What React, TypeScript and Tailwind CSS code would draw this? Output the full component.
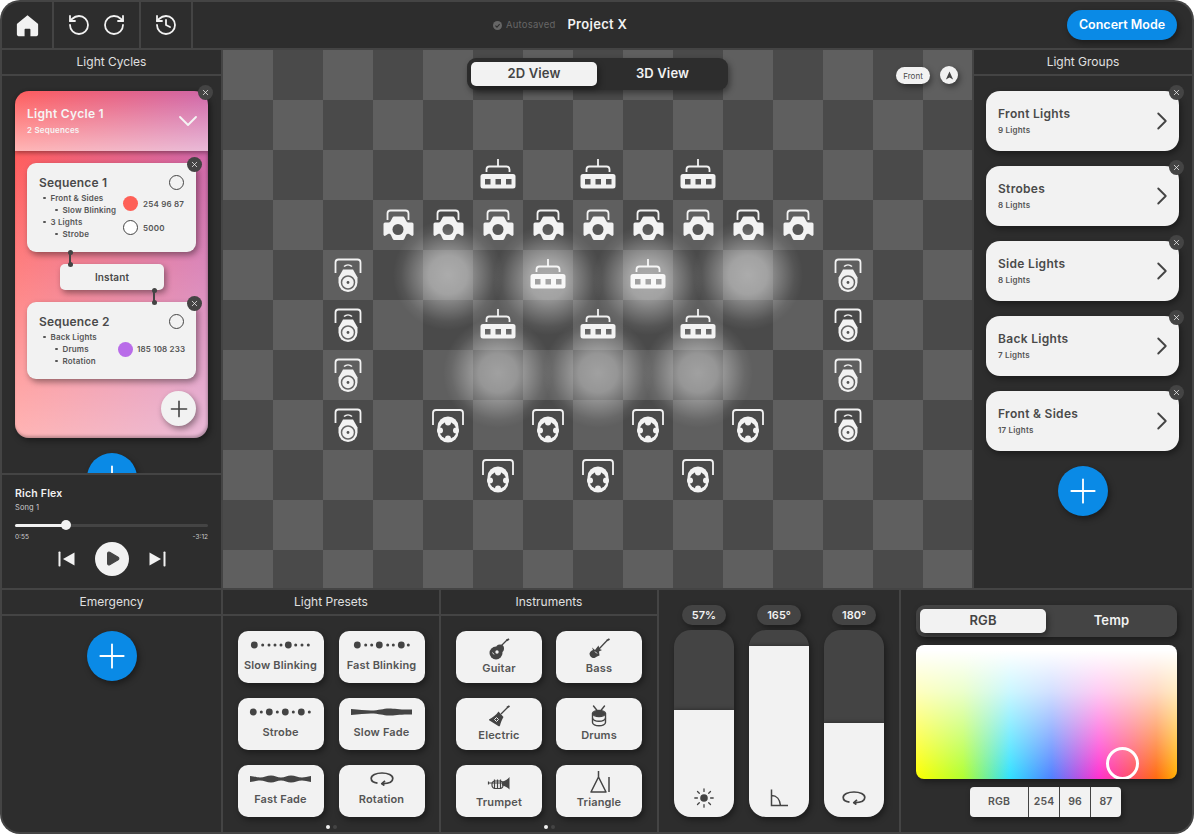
import React from 'react';
import { RotateCcw, RotateCw, History, ChevronDown, ChevronRight, Plus, X, Play } from 'lucide-react';

const CARD_SHADOW = 'shadow-[2px_3px_6px_rgba(0,0,0,0.4)]';
const CARD_GRADIENT =
  'bg-[linear-gradient(to_bottom,rgba(255,255,255,0),rgba(255,255,255,0.55)),linear-gradient(to_right,#ff5c5c,#cf66a8)]';

// ---- stage light glyphs, all on a 50x50 cell

const BarLight = () => (
  <svg viewBox="0 0 50 50" className="w-[50px] h-[50px]">
    <path d="M25 9v7M13.5 22v-2.5a3 3 0 0 1 3-3h17a3 3 0 0 1 3 3V22" fill="none" stroke="#f2f2f2" strokeWidth="1.8" />
    <rect x="7.5" y="24" width="35" height="14.5" rx="2.5" fill="#f2f2f2" />
    <rect x="12" y="29" width="5.5" height="5.5" fill="#555" />
    <rect x="22.5" y="29" width="5.5" height="5.5" fill="#555" />
    <rect x="33" y="29" width="5.5" height="5.5" fill="#555" />
  </svg>
);

const SpotLight = () => (
  <svg viewBox="0 0 50 50" className="w-[50px] h-[50px]">
    <path d="M14.5 20v-6.5a3 3 0 0 1 3-3h15a3 3 0 0 1 3 3V20" fill="none" stroke="#f2f2f2" strokeWidth="1.8" />
    <path
      d="M20.5 16.5h9c1 0 1.700.4 2.200 1.400l1.600 3c.6 1 1.400 1.600 2.700 1.600h3a1.500 1.500 0 0 1 1.500 1.500v10.500c0 1.300-1.200 1.800-2.200 1.100l-2.300-1.600c-1-.7-2.300-.3-2.800.8l-1.700 3.700c-.5 1-1.200 1.500-2.300 1.500h-7.400c-1.100 0-1.800-.5-2.300-1.500l-1.700-3.700c-.5-1.100-1.800-1.500-2.800-.8l-2.300 1.600c-1 .7-2.200.2-2.200-1.100V24a1.500 1.500 0 0 1 1.500-1.500h3c1.300 0 2.100-.6 2.700-1.600l1.600-3c.5-1 1.200-1.400 2.200-1.400z"
      fill="#f2f2f2"
    />
    <circle cx="25" cy="29.5" r="5.5" fill="#555" />
  </svg>
);

const SideLight = () => (
  <svg viewBox="0 0 50 50" className="w-[50px] h-[50px]">
    <path d="M12.5 23v-10.500a3 3 0 0 1 3-3h19a3 3 0 0 1 3 3V23" fill="none" stroke="#f2f2f2" strokeWidth="1.8" />
    <path d="M21 16.5a6 6 0 0 1 8 0" fill="none" stroke="#f2f2f2" strokeWidth="1.6" />
    <path d="M20 19.5h10l4.500 8v5a9.500 9.500 0 0 1-19 0v-5z" fill="#f2f2f2" />
    <circle cx="25" cy="32.5" r="6.5" fill="none" stroke="#666" strokeWidth="1.5" />
    <circle cx="25" cy="32.5" r="1.4" fill="#555" />
  </svg>
);

const BackLight = () => (
  <svg viewBox="0 0 50 50" className="w-[50px] h-[50px]">
    <path d="M10 25V13a3 3 0 0 1 3-3h24a3 3 0 0 1 3 3v12" fill="none" stroke="#f2f2f2" strokeWidth="1.8" />
    <rect x="14.5" y="16.5" width="21" height="26" rx="10.5" fill="#f2f2f2" />
    <circle cx="25" cy="30.5" r="8.5" fill="#4a4a4a" />
    <circle cx="25" cy="22.5" r="3" fill="#f2f2f2" />
    <circle cx="25" cy="38.5" r="3" fill="#f2f2f2" />
    <circle cx="17" cy="30.5" r="3" fill="#f2f2f2" />
    <circle cx="33" cy="30.5" r="3" fill="#f2f2f2" />
  </svg>
);

const CELL_LIGHTS: Record<string, React.ReactNode> = {};
[5, 7, 9].forEach((c) => (CELL_LIGHTS[`${c},2`] = <BarLight />));
[3, 4, 5, 6, 7, 8, 9, 10, 11].forEach((c) => (CELL_LIGHTS[`${c},3`] = <SpotLight />));
[6, 8].forEach((c) => (CELL_LIGHTS[`${c},4`] = <BarLight />));
[5, 7, 9].forEach((c) => (CELL_LIGHTS[`${c},5`] = <BarLight />));
[4, 5, 6, 7].forEach((r) => {
  CELL_LIGHTS[`2,${r}`] = <SideLight />;
  CELL_LIGHTS[`12,${r}`] = <SideLight />;
});
[4, 6, 8, 10].forEach((c) => (CELL_LIGHTS[`${c},7`] = <BackLight />));
[5, 7, 9].forEach((c) => (CELL_LIGHTS[`${c},8`] = <BackLight />));

const GLOW =
  'absolute w-[110px] h-[110px] rounded-full pointer-events-none bg-[radial-gradient(closest-side,rgba(255,255,255,0.48)_0%,rgba(255,255,255,0.42)_35%,rgba(255,255,255,0.24)_60%,rgba(255,255,255,0.06)_85%,rgba(255,255,255,0)_100%)]';

// ---- little shared bits

const CloseBadge = ({ className }: { className: string }) => (
  <div className={`absolute w-[15px] h-[15px] rounded-full bg-[#444444] flex items-center justify-center ${className}`}>
    <X size={9} color="#f2f2f2" strokeWidth={2} />
  </div>
);

const PanelTitle = ({ children }: { children: React.ReactNode }) => (
  <div className="h-[24px] shrink-0 bg-[#2d2d2d] flex items-center justify-center text-[12px] text-[#e0e0e0]">
    {children}
  </div>
);

const BlueAdd = ({ className = '' }: { className?: string }) => (
  <div className={`w-[50px] h-[50px] rounded-full bg-[#0a8ae6] flex items-center justify-center shrink-0 ${CARD_SHADOW} ${className}`}>
    <Plus size={40} color="#ffffff" strokeWidth={1.1} />
  </div>
);

const Dot = ({ className }: { className: string }) => <div className={`w-[15px] h-[15px] rounded-full ${className}`} />;

const Bullet = ({ sub, children }: { sub?: boolean; children: React.ReactNode }) => (
  <div className={`h-[12px] flex items-center text-[8px] font-semibold text-[#555555] tracking-[0.15px] whitespace-nowrap ${sub ? 'pl-[16px]' : 'pl-[4px]'}`}>
    <span className="w-[2.5px] h-[2.5px] rounded-full bg-[#555555] mr-[5px]" />
    {children}
  </div>
);

const Connector = ({ className }: { className: string }) => (
  <div className={`absolute z-10 w-[6px] flex flex-col items-center ${className}`}>
    <span className="w-[5px] h-[5px] rounded-full bg-[#444444] shrink-0" />
    <span className="w-[1.5px] grow bg-[#444444] -my-[1px]" />
    <span className="w-[5px] h-[5px] rounded-full bg-[#444444] shrink-0" />
  </div>
);

const Toggle = ({ left, right, className }: { left: string; right: string; className: string }) => (
  <div className={`w-[261px] h-[32px] rounded-[9px] flex items-center p-[4px] ${className}`}>
    <div className={`w-[126px] h-[24px] rounded-[5px] bg-[#f2f2f2] flex items-center justify-center text-[13px] font-semibold text-[#444444] tracking-[0.15px] ${CARD_SHADOW}`}>
      {left}
    </div>
    <div className="grow h-[24px] pl-[4px] flex items-center justify-center text-[13px] font-semibold text-[#f2f2f2] tracking-[0.15px]">{right}</div>
  </div>
);

// ---- preset glyphs

const DotRow = ({ big, small }: { big: number[]; small: number[] }) => (
  <svg viewBox="0 0 86 12" className="w-[86px] h-[12px]">
    {big.map((x) => (
      <circle key={x} cx={x} cy="6" r="3.4" fill="#444" />
    ))}
    {small.map((x) => (
      <circle key={x} cx={x} cy="6" r="1.5" fill="#444" />
    ))}
  </svg>
);

const SlowFade = () => (
  <svg viewBox="0 0 86 12" className="w-[86px] h-[12px]">
    <path d="M12 3C20 3.500 26 4.500 32 4.500 40 4.500 44 2.500 50 2.500 56 2.500 62 4 73 3.500V8.500C62 8 56 9.500 50 9.500 44 9.500 40 7.500 32 7.500 26 7.500 20 8.500 12 9z" fill="#444" />
  </svg>
);

const FastFade = () => (
  <svg viewBox="0 0 86 12" className="w-[86px] h-[12px]">
    <path d="M12 3C17 3.500 19 4.500 22 4.500 26 4.500 29 2.500 33 2.500 37 2.500 39 4.500 43 4.500 47 4.500 49 2.500 53 2.500 57 2.500 60 4.500 64 4.500 67 4.500 69 3.500 73 3V9C69 8.500 67 7.500 64 7.500 60 7.500 57 9.500 53 9.500 49 9.500 47 7.500 43 7.500 39 7.500 37 9.500 33 9.500 29 9.500 26 7.500 22 7.500 19 7.500 17 8.500 12 9z" fill="#444" />
  </svg>
);

const RotationGlyph = () => (
  <svg viewBox="0 0 24 14" className="w-[24px] h-[14px]" fill="none" stroke="#444" strokeWidth="1.7">
    <path d="M7.500 11.200C3.500 10.600 1.200 8.800 1.200 6.500 1.200 3.300 6 1 12 1s10.800 2.300 10.800 5.500c0 3-4 5.100-10.300 5.200" />
    <path d="M15 8.800l-3.200 2.900 2.600 1.800" strokeLinejoin="round" />
  </svg>
);

// ---- instrument glyphs

const GuitarIcon = () => (
  <svg viewBox="0 0 24 24" className="w-[24px] h-[24px]">
    <path d="M13.500 9.500l7-7" stroke="#444" strokeWidth="1.3" />
    <circle cx="9" cy="16" r="6.5" fill="#444" />
    <circle cx="13" cy="11.500" r="4" fill="#444" />
    <path d="M19.500 3.500L22 2" stroke="#444" strokeWidth="2" />
    <circle cx="10" cy="15" r="1.7" fill="#f2f2f2" />
    <path d="M5.500 15.500l1.500 2" stroke="#f2f2f2" strokeWidth="0.9" />
  </svg>
);

const BassIcon = () => (
  <svg viewBox="0 0 24 24" className="w-[24px] h-[24px]">
    <path d="M11 13L20.500 3" stroke="#444" strokeWidth="1.3" />
    <path d="M20 3.500L22.500 2" stroke="#444" strokeWidth="2" />
    <path d="M11.500 8.500l1 3.500 2.500 1-3 1.500.5 4c-2 .5-3 1.500-5 2.500-2.500.5-5-2-5-4.500 .5-2 2-3 3.500-3.500L5 10.500l3 2.500z" fill="#444" />
    <path d="M8 14.500l2 2" stroke="#f2f2f2" strokeWidth="1" />
  </svg>
);

const ElectricIcon = () => (
  <svg viewBox="0 0 24 24" className="w-[24px] h-[24px]">
    <path d="M14 10l7-7" stroke="#444" strokeWidth="1.3" />
    <path d="M20 3.500L22.500 2" stroke="#444" strokeWidth="2" />
    <path d="M11.500 7.500l5 5.500c-1.500 2.500-3 6-3.500 8.500-.3 1-1 1-1.700.6L2.500 16.500c-.7-.5-.6-1.200.3-1.600 2.500-1.400 6.500-4 8.700-7.400z" fill="#444" />
    <path d="M9.500 13.500l2 2-2 2-2-2z" fill="none" stroke="#f2f2f2" strokeWidth="1" />
  </svg>
);

const DrumIcon = () => (
  <svg viewBox="0 0 24 24" className="w-[24px] h-[24px]" fill="none" stroke="#444" strokeWidth="1.4">
    <path d="M6.500 2l4 5M17.500 2l-4 5" strokeLinecap="round" />
    <ellipse cx="12" cy="9.500" rx="6.500" ry="3" fill="#444" />
    <path d="M5.500 9.500v9c0 1.800 3 3.300 6.500 3.300s6.500-1.500 6.500-3.300v-9" />
    <path d="M5.500 14c0 1.800 3 3.300 6.500 3.300s6.500-1.500 6.500-3.300" />
  </svg>
);

const TrumpetIcon = () => (
  <svg viewBox="0 0 24 24" className="w-[24px] h-[24px]">
    <path d="M1.500 10.500v3M1.500 12H16" fill="none" stroke="#444" strokeWidth="1.2" />
    <rect x="5" y="10" width="11" height="7.500" rx="3.200" fill="none" stroke="#444" strokeWidth="1.2" />
    <path d="M7.500 8.500v9.500M10.500 8.500v9.500M13.500 8.500v9.500" stroke="#444" strokeWidth="1.2" />
    <path d="M15 10.500c3-.5 5.500-2 7.500-4.500v12.500c-2-2-4.500-3.500-7.500-4z" fill="#444" />
  </svg>
);

const TriangleIcon = () => (
  <svg viewBox="0 0 24 24" className="w-[24px] h-[24px]" fill="none" stroke="#444" strokeWidth="1.5">
    <path d="M11.500 0v6M11.500 6L4 21h15z" strokeLinejoin="round" />
    <path d="M22 6v15" />
  </svg>
);

const PresetCard = ({ label, children, tall }: { label: string; children: React.ReactNode; tall?: boolean }) => (
  <div className={`h-[52px] rounded-[10px] bg-[#f2f2f2] flex flex-col items-center ${tall ? 'pt-[6px] gap-[1px]' : 'pt-[8px] gap-[8px]'} ${CARD_SHADOW}`}>
    <div className={`${tall ? 'h-[24px]' : 'h-[12px]'} flex items-center justify-center`}>{children}</div>
    <div className="h-[12px] flex items-center text-[11px] font-semibold text-[#555555] tracking-[0.15px] whitespace-nowrap">{label}</div>
  </div>
);

const GroupCard = ({ name, count }: { name: string; count: string }) => (
  <div className={`relative w-[193px] h-[60px] rounded-[14px] bg-[#f2f2f2] flex items-center justify-between pl-[12px] pr-[2.5px] shrink-0 ${CARD_SHADOW}`}>
    <div className="flex flex-col pb-[2px]">
      <div className="text-[12px] leading-[16px] font-semibold text-[#4a4a4a] tracking-[0.3px]">{name}</div>
      <div className="text-[8px] leading-[10px] mt-[3px] font-semibold text-[#555555] tracking-[0.2px]">{count}</div>
    </div>
    <ChevronRight size={30} color="#444444" strokeWidth={1.5} />
    <CloseBadge className="-top-[6.5px] -right-[5px]" />
  </div>
);

const Slider = ({ value, fill, children }: { value: string; fill: string; children: React.ReactNode }) => (
  <div className="flex flex-col items-center w-[60px]">
    <div className={`w-[44px] h-[20px] rounded-full bg-[#444444] flex items-center justify-center text-[11px] font-semibold text-[#f2f2f2] ${CARD_SHADOW}`}>
      {value}
    </div>
    <div className={`mt-[5px] w-[60px] h-[187px] rounded-[17px] bg-[#444444] overflow-hidden flex flex-col justify-end ${CARD_SHADOW}`}>
      <div className={`${fill} bg-[#f2f2f2] flex flex-col items-center justify-end pb-[9px] shadow-[0_-1px_4px_rgba(0,0,0,0.3)]`}>{children}</div>
    </div>
  </div>
);

const PageDots = () => (
  <div className="flex gap-[3px] mt-[8px]">
    <span className="w-[4px] h-[4px] rounded-full bg-[#f2f2f2]" />
    <span className="w-[4px] h-[4px] rounded-full bg-[#444444]" />
  </div>
);

export default function App() {
  const cells = [];
  for (let r = 0; r < 11; r++) {
    for (let c = 0; c < 15; c++) {
      cells.push(
        <div key={`${c},${r}`} className={(c + r) % 2 === 0 ? 'bg-[#5f5f5f]' : 'bg-[#4a4a4a]'}>
          {CELL_LIGHTS[`${c},${r}`]}
        </div>
      );
    }
  }

  return (
    <div className="w-[1194px] h-[834px] bg-white font-['Inter',sans-serif] overflow-hidden">
      <div className="w-full h-full bg-[#444444] rounded-[20px] p-[2px] flex flex-col gap-[2px] overflow-hidden">
        {/* top bar */}
        <div className="h-[46px] flex gap-[2px] shrink-0">
          <div className="w-[50px] bg-[#2d2d2d] rounded-tl-[18px] flex items-center justify-center">
            <svg viewBox="0 0 24 24" className="w-[25px] h-[25px]">
              <path d="M12 2.200L2.300 10c-.4.300-.5.600-.5 1v9.500c0 1 .7 1.700 1.700 1.700h5.700V16c0-.6.400-1 1-1h3.600c.6 0 1 .4 1 1v6.200h5.700c1 0 1.700-.7 1.700-1.700V11c0-.4-.1-.7-.5-1z" fill="#f2f2f2" />
            </svg>
          </div>
          <div className="w-[85px] bg-[#2d2d2d] flex items-center justify-center gap-[11px]">
            <RotateCcw size={24} color="#f2f2f2" strokeWidth={1.8} />
            <RotateCw size={24} color="#f2f2f2" strokeWidth={1.8} />
          </div>
          <div className="w-[50px] bg-[#2d2d2d] flex items-center justify-center">
            <History size={24} color="#f2f2f2" strokeWidth={1.8} />
          </div>
          <div className="grow bg-[#2d2d2d] rounded-tr-[18px] flex items-center pl-[300px] pr-[15px]">
            <svg viewBox="0 0 10 10" className="w-[9px] h-[9px] mr-[4px]">
              <circle cx="5" cy="5" r="5" fill="#666" />
              <path d="M2.700 5.200l1.700 1.600 3-3.200" fill="none" stroke="#2d2d2d" strokeWidth="1.2" />
            </svg>
            <span className="text-[9.5px] text-[#666666] tracking-[0.2px]">Autosaved</span>
            <span className="ml-[12px] text-[13px] font-semibold text-[#f2f2f2] tracking-[0.3px]">Project X</span>
            <div className={`ml-auto w-[110px] h-[30px] rounded-[15px] bg-[#0a8ae6] flex items-center justify-center text-[12.5px] font-semibold text-white ${CARD_SHADOW}`}>
              Concert Mode
            </div>
          </div>
        </div>

        {/* middle row */}
        <div className="h-[538px] flex gap-[2px] shrink-0">
          <div className="w-[219px] flex flex-col gap-[2px] shrink-0">
            <PanelTitle>Light Cycles</PanelTitle>
            <div className="h-[397px] bg-[#2d2d2d] overflow-hidden flex flex-col pt-[15px]">
              <div className={`relative ml-[13px] w-[193px] h-[347px] rounded-[14px] shrink-0 flex flex-col ${CARD_SHADOW}`}>
                <div className={`h-[60px] rounded-t-[14px] pl-[12px] pr-[4px] flex items-center justify-between shadow-[0_2px_4px_rgba(0,0,0,0.35)] z-10 ${CARD_GRADIENT}`}>
                  <div className="flex flex-col pb-[2px]">
                    <div className="text-[12px] leading-[16px] font-semibold text-[#f5f5f5] tracking-[0.3px]">Light Cycle 1</div>
                    <div className="text-[8px] leading-[10px] mt-[3px] font-semibold text-[#f5f5f5] tracking-[0.2px]">2 Sequences</div>
                  </div>
                  <ChevronDown size={32} color="#f5f5f5" strokeWidth={1.4} />
                </div>
                <CloseBadge className="-top-[6.5px] -right-[4.5px] z-20" />
                <div className={`relative grow rounded-b-[14px] px-[12px] pt-[12px] flex flex-col shadow-[inset_-1px_-2px_3px_rgba(0,0,0,0.25)] ${CARD_GRADIENT}`}>
                  <div className={`relative w-[169px] h-[89px] shrink-0 rounded-[9px] bg-[#f2f2f2] px-[12px] pt-[12px] ${CARD_SHADOW}`}>
                    <div className="flex items-center justify-between h-[15px]">
                      <span className="text-[12px] font-semibold text-[#4a4a4a] tracking-[0.2px]">Sequence 1</span>
                      <Dot className="border border-[#444444]" />
                    </div>
                    <div className="flex mt-[2px]">
                      <div className="w-[84px] shrink-0">
                        <Bullet>Front &amp; Sides</Bullet>
                        <Bullet sub>Slow Blinking</Bullet>
                        <Bullet>3 Lights</Bullet>
                        <Bullet sub>Strobe</Bullet>
                      </div>
                      <div className="flex flex-col gap-[9px] pt-[4px] text-[8px] font-semibold text-[#555555] tracking-[0.2px]">
                        <div className="flex items-center gap-[5px]">
                          <Dot className="bg-[#fe6057]" />
                          <span className="whitespace-nowrap">254 96 87</span>
                        </div>
                        <div className="flex items-center gap-[5px]">
                          <Dot className="bg-white border border-[#444444]" />
                          <span>5000</span>
                        </div>
                      </div>
                    </div>
                    <CloseBadge className="-top-[6.5px] -right-[5.5px]" />
                    <Connector className="top-[86.5px] left-[40px] h-[17px]" />
                  </div>
                  <div className={`relative mt-[12px] ml-[33px] w-[104px] h-[26px] shrink-0 rounded-[5px] bg-[#f2f2f2] flex items-center justify-center text-[10px] font-semibold text-[#4a4a4a] tracking-[0.1px] ${CARD_SHADOW}`}>
                    Instant
                    <Connector className="top-[23.5px] left-[91px] h-[17px]" />
                  </div>
                  <div className={`relative mt-[12px] w-[169px] h-[77px] shrink-0 rounded-[9px] bg-[#f2f2f2] pl-[12px] pr-[9px] pt-[12px] ${CARD_SHADOW}`}>
                    <div className="flex items-center justify-between h-[15px] pr-[3px]">
                      <span className="text-[12px] font-semibold text-[#4a4a4a] tracking-[0.2px]">Sequence 2</span>
                      <Dot className="border border-[#444444]" />
                    </div>
                    <div className="flex mt-[2px]">
                      <div className="w-[79px] shrink-0">
                        <Bullet>Back Lights</Bullet>
                        <Bullet sub>Drums</Bullet>
                        <Bullet sub>Rotation</Bullet>
                      </div>
                      <div className="flex items-center gap-[4px] text-[8px] font-semibold text-[#555555] tracking-[0.15px]">
                        <Dot className="bg-[#b96ce9] shrink-0" />
                        <span className="whitespace-nowrap">185 108 233</span>
                      </div>
                    </div>
                    <CloseBadge className="-top-[6.5px] -right-[5.5px]" />
                  </div>
                  <div className="flex justify-end mt-[12px]">
                    <div className={`w-[35px] h-[35px] rounded-full bg-[#f2f2f2] flex items-center justify-center ${CARD_SHADOW}`}>
                      <Plus size={26} color="#444444" strokeWidth={1.5} />
                    </div>
                  </div>
                </div>
              </div>
              <BlueAdd className="mx-auto mt-[15px]" />
            </div>
            <div className="grow bg-[#2d2d2d] px-[13px] pt-[12px] flex flex-col">
              <div className="text-[10.5px] leading-[14px] font-semibold text-[#f2f2f2] tracking-[0.2px]">Rich Flex</div>
              <div className="text-[7.5px] leading-[10px] mt-[2px] text-[#cccccc] tracking-[0.1px]">Song 1</div>
              <div className="relative h-[3px] mt-[10.5px] rounded-full bg-[#444444]">
                <div className="w-[51px] h-full rounded-full bg-[#f2f2f2]" />
                <div className="absolute -top-[3.5px] left-[46px] w-[10px] h-[10px] rounded-full bg-[#f2f2f2]" />
              </div>
              <div className="flex justify-between mt-[6px] text-[6.5px] leading-[8px] text-[#cccccc]">
                <span>0:55</span>
                <span>-3:12</span>
              </div>
              <div className="flex items-center justify-center gap-[20px] mt-[1px]">
                <svg viewBox="0 0 17 16" className="w-[17px] h-[16px]">
                  <rect x="0.5" y="0.5" width="2" height="15" rx="0.8" fill="#f2f2f2" />
                  <path d="M16.500 1.500v13L5 8z" fill="#f2f2f2" />
                </svg>
                <div className="w-[34px] h-[34px] rounded-full bg-[#f2f2f2] flex items-center justify-center">
                  <Play size={17} color="#444444" fill="#444444" strokeWidth={1.5} className="ml-[2px]" />
                </div>
                <svg viewBox="0 0 17 16" className="w-[17px] h-[16px]">
                  <path d="M.5 1.500v13L12 8z" fill="#f2f2f2" />
                  <rect x="14.5" y="0.5" width="2" height="15" rx="0.8" fill="#f2f2f2" />
                </svg>
              </div>
            </div>
          </div>

          <div className="relative w-[749px] shrink-0 overflow-hidden">
            <div className="grid grid-cols-[repeat(15,50px)] auto-rows-[50px]">{cells}</div>
            <div className={`${GLOW} left-[170px] top-[170px]`} />
            <div className={`${GLOW} left-[470px] top-[170px]`} />
            <div className={`${GLOW} left-[270px] top-[175px]`} />
            <div className={`${GLOW} left-[370px] top-[175px]`} />
            <div className={`${GLOW} left-[220px] top-[268px]`} />
            <div className={`${GLOW} left-[320px] top-[268px]`} />
            <div className={`${GLOW} left-[420px] top-[268px]`} />
            <Toggle left="2D View" right="3D View" className={`absolute left-[244px] top-[8px] bg-[#2d2d2d] ${CARD_SHADOW}`} />
            <div className={`absolute left-[673px] top-[17px] w-[34px] h-[17px] rounded-full bg-[#f2f2f2] flex items-center justify-center text-[8px] text-[#4a4a4a] ${CARD_SHADOW}`}>
              Front
            </div>
            <div className={`absolute left-[717px] top-[16px] w-[18px] h-[18px] rounded-full bg-[#f2f2f2] flex items-center justify-center ${CARD_SHADOW}`}>
              <svg viewBox="0 0 10 10" className="w-[9px] h-[9px]">
                <path d="M5 .5L9 9.500 5 7.300 1 9.500z" fill="#444" />
              </svg>
            </div>
          </div>

          <div className="grow flex flex-col gap-[2px]">
            <PanelTitle>Light Groups</PanelTitle>
            <div className="grow bg-[#2d2d2d] flex flex-col items-center gap-[15px] pt-[15px] pr-[1px]">
              <GroupCard name="Front Lights" count="9 Lights" />
              <GroupCard name="Strobes" count="8 Lights" />
              <GroupCard name="Side Lights" count="8 Lights" />
              <GroupCard name="Back Lights" count="7 Lights" />
              <GroupCard name="Front & Sides" count="17 Lights" />
              <BlueAdd />
            </div>
          </div>
        </div>

        {/* bottom row */}
        <div className="grow flex gap-[2px] min-h-0">
          <div className="w-[219px] flex flex-col gap-[2px] shrink-0">
            <PanelTitle>Emergency</PanelTitle>
            <div className="grow bg-[#2d2d2d] rounded-bl-[18px] flex justify-center pt-[15px]">
              <BlueAdd />
            </div>
          </div>

          <div className="w-[216px] flex flex-col gap-[2px] shrink-0">
            <PanelTitle>Light Presets</PanelTitle>
            <div className="grow bg-[#2d2d2d] pt-[15px] flex flex-col items-center">
              <div className="grid grid-cols-[86px_86px] gap-[15px]">
                <PresetCard label="Slow Blinking">
                  <DotRow big={[16.3, 50.3]} small={[24.7, 31, 37, 43, 57.7, 64, 70.3]} />
                </PresetCard>
                <PresetCard label="Fast Blinking">
                  <DotRow big={[18.3, 40.3, 62.3]} small={[26.7, 32.7, 48.7, 54.3, 69.3]} />
                </PresetCard>
                <PresetCard label="Strobe">
                  <DotRow big={[15.3, 31.3, 47.3, 63.3]} small={[23.3, 39.3, 55.3, 71.3]} />
                </PresetCard>
                <PresetCard label="Slow Fade">
                  <SlowFade />
                </PresetCard>
                <PresetCard label="Fast Fade">
                  <FastFade />
                </PresetCard>
                <PresetCard label="Rotation">
                  <RotationGlyph />
                </PresetCard>
              </div>
              <PageDots />
            </div>
          </div>

          <div className="w-[216px] flex flex-col gap-[2px] shrink-0">
            <PanelTitle>Instruments</PanelTitle>
            <div className="grow bg-[#2d2d2d] pt-[15px] flex flex-col items-center">
              <div className="grid grid-cols-[86px_86px] gap-x-[14px] gap-y-[15px]">
                <PresetCard tall label="Guitar">
                  <GuitarIcon />
                </PresetCard>
                <PresetCard tall label="Bass">
                  <BassIcon />
                </PresetCard>
                <PresetCard tall label="Electric">
                  <ElectricIcon />
                </PresetCard>
                <PresetCard tall label="Drums">
                  <DrumIcon />
                </PresetCard>
                <PresetCard tall label="Trumpet">
                  <TrumpetIcon />
                </PresetCard>
                <PresetCard tall label="Triangle">
                  <TriangleIcon />
                </PresetCard>
              </div>
              <PageDots />
            </div>
          </div>

          <div className="w-[240px] bg-[#2d2d2d] flex justify-center gap-[15px] pt-[15px] shrink-0">
            <Slider value="57%" fill="h-[107px]">
              <svg viewBox="0 0 20 20" className="w-[20px] h-[20px]" stroke="#444" strokeWidth="1.3" strokeLinecap="round">
                <circle cx="10" cy="10" r="3.8" fill="#444" stroke="none" />
                <path d="M10 .8v2.600M10 16.600v2.600M.8 10h2.600M16.600 10h2.600M3.500 3.500l1.800 1.800M14.700 14.700l1.800 1.800M3.500 16.500l1.800-1.800M14.700 5.300l1.800-1.800" fill="none" />
              </svg>
            </Slider>
            <Slider value="165°" fill="h-[171px]">
              <svg viewBox="0 0 20 20" className="w-[20px] h-[20px]" fill="none" stroke="#444" strokeWidth="1.5">
                <path d="M2.500 1.500v16H19M2.500 7.500c5 0 8.500 4 9 10" />
              </svg>
            </Slider>
            <Slider value="180°" fill="h-[94px]">
              <div className="h-[20px] flex items-center">
                <RotationGlyph />
              </div>
            </Slider>
          </div>

          <div className="grow bg-[#2d2d2d] rounded-br-[18px] flex flex-col items-center pt-[15px]">
            <Toggle left="RGB" right="Temp" className={`bg-[#444444] ${CARD_SHADOW}`} />
            <div className={`relative mt-[8px] w-[261px] h-[134px] rounded-[8px] overflow-hidden shrink-0 ${CARD_SHADOW} bg-[linear-gradient(to_bottom,#ffffff_4%,rgba(255,255,255,0.75)_35%,rgba(255,255,255,0)_100%),linear-gradient(to_right,#ffff00_0%,#b0ff30_18%,#30e0ff_36%,#5080ff_52%,#ff30d0_70%,#ff5060_83%,#ff6a10_92%,#ffb000_100%)]`}>
              <div className="absolute left-[190px] top-[102px] w-[33px] h-[33px] rounded-full border-[3px] border-white" />
            </div>
            <div className={`mt-[8px] self-start ml-[69px] h-[30px] rounded-[4px] bg-[#f2f2f2] flex text-[10.5px] font-semibold text-[#555555] tracking-[0.15px] divide-x divide-[#444444] overflow-hidden ${CARD_SHADOW}`}>
              <div className="w-[59px] flex items-center justify-center">RGB</div>
              <div className="w-[31px] flex items-center justify-center">254</div>
              <div className="w-[31px] flex items-center justify-center">96</div>
              <div className="w-[30px] flex items-center justify-center">87</div>
            </div>
          </div>
        </div>
      </div>
    </div>
  );
}
